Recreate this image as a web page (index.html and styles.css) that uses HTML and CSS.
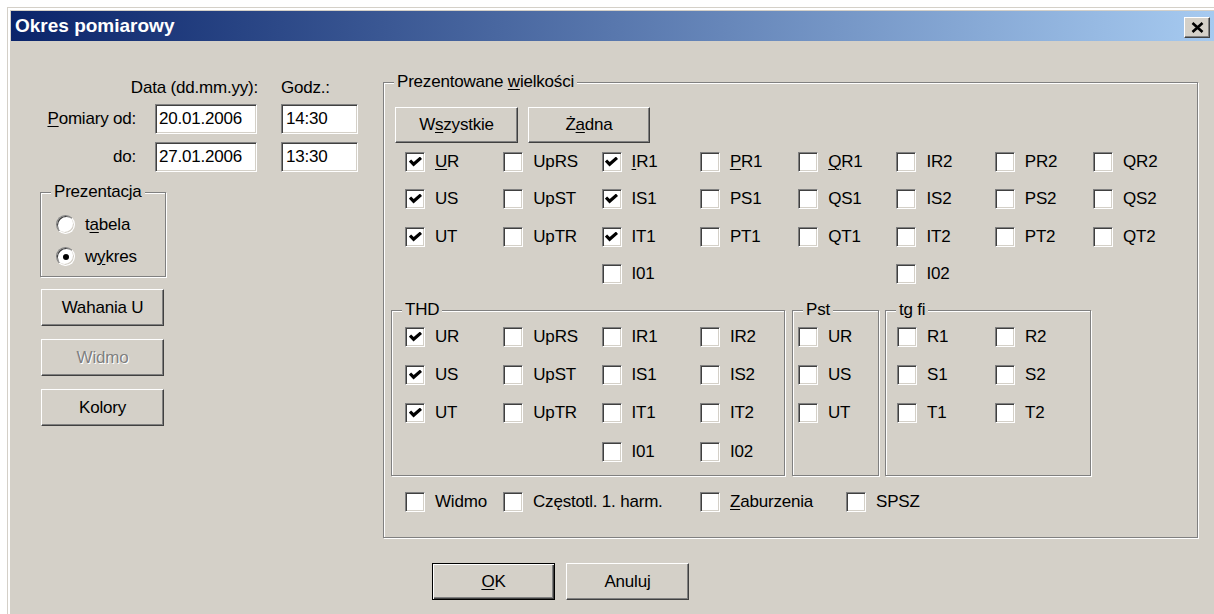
FILE: index.html
```html
<!DOCTYPE html>
<html lang="pl">
<head>
<meta charset="utf-8">
<title>Okres pomiarowy</title>
<link rel="stylesheet" href="styles.css">
</head>
<body>
<div class="window">
  <div class="titlebar">
    <span class="title">Okres pomiarowy</span>
    <span class="close"><svg width="13" height="11" viewBox="0 0 13 11"><path d="M1.5 1 L11.5 10 M11.5 1 L1.5 10" stroke="#000" stroke-width="2.6" fill="none"/></svg></span>
  </div>

  <div class="client">
    <div class="left">
      <div class="date-head">
        <span class="head-date">Data (dd.mm.yy):</span>
        <span class="head-time">Godz.:</span>
      </div>
      <div class="date-row">
        <span class="row-label"><u>P</u>omiary od:</span>
        <span class="field date">20.01.2006</span>
        <span class="field time">14:30</span>
      </div>
      <div class="date-row second">
        <span class="row-label">do:</span>
        <span class="field date">27.01.2006</span>
        <span class="field time">13:30</span>
      </div>

      <div class="group present">
        <span class="caption">Prezentacja</span>
        <div class="radios">
          <div class="opt"><span class="radio"></span><span>t<u>a</u>bela</span></div>
          <div class="opt"><span class="radio on"></span><span>w<u>y</u>kres</span></div>
        </div>
      </div>

      <div class="side-buttons">
        <button class="btn">Wahania U</button>
        <button class="btn disabled">Widmo</button>
        <button class="btn">Kolory</button>
      </div>
    </div>

    <div class="group main-group">
      <span class="caption">Prezentowane <u>w</u>ielkości</span>
      <div class="btn-row">
        <button class="btn top-btn">W<u>s</u>zystkie</button>
        <button class="btn top-btn narrow">Ż<u>a</u>dna</button>
      </div>

      <div class="grid-top">
        <div class="cb"><span class="box on"><svg viewBox="0 0 13 10" width="13" height="10"><path d="M1 3.6 L4.6 7.2 L12 0.8" fill="none" stroke="#000" stroke-width="3.2"/></svg></span><span><u>U</u>R</span></div>
        <div class="cb"><span class="box"></span><span>UpRS</span></div>
        <div class="cb"><span class="box on"><svg viewBox="0 0 13 10" width="13" height="10"><path d="M1 3.6 L4.6 7.2 L12 0.8" fill="none" stroke="#000" stroke-width="3.2"/></svg></span><span><u>I</u>R1</span></div>
        <div class="cb"><span class="box"></span><span><u>P</u>R1</span></div>
        <div class="cb"><span class="box"></span><span><u>Q</u>R1</span></div>
        <div class="cb"><span class="box"></span><span>IR2</span></div>
        <div class="cb"><span class="box"></span><span>PR2</span></div>
        <div class="cb"><span class="box"></span><span>QR2</span></div>

        <div class="cb"><span class="box on"><svg viewBox="0 0 13 10" width="13" height="10"><path d="M1 3.6 L4.6 7.2 L12 0.8" fill="none" stroke="#000" stroke-width="3.2"/></svg></span><span>US</span></div>
        <div class="cb"><span class="box"></span><span>UpST</span></div>
        <div class="cb"><span class="box on"><svg viewBox="0 0 13 10" width="13" height="10"><path d="M1 3.6 L4.6 7.2 L12 0.8" fill="none" stroke="#000" stroke-width="3.2"/></svg></span><span>IS1</span></div>
        <div class="cb"><span class="box"></span><span>PS1</span></div>
        <div class="cb"><span class="box"></span><span>QS1</span></div>
        <div class="cb"><span class="box"></span><span>IS2</span></div>
        <div class="cb"><span class="box"></span><span>PS2</span></div>
        <div class="cb"><span class="box"></span><span>QS2</span></div>

        <div class="cb"><span class="box on"><svg viewBox="0 0 13 10" width="13" height="10"><path d="M1 3.6 L4.6 7.2 L12 0.8" fill="none" stroke="#000" stroke-width="3.2"/></svg></span><span>UT</span></div>
        <div class="cb"><span class="box"></span><span>UpTR</span></div>
        <div class="cb"><span class="box on"><svg viewBox="0 0 13 10" width="13" height="10"><path d="M1 3.6 L4.6 7.2 L12 0.8" fill="none" stroke="#000" stroke-width="3.2"/></svg></span><span>IT1</span></div>
        <div class="cb"><span class="box"></span><span>PT1</span></div>
        <div class="cb"><span class="box"></span><span>QT1</span></div>
        <div class="cb"><span class="box"></span><span>IT2</span></div>
        <div class="cb"><span class="box"></span><span>PT2</span></div>
        <div class="cb"><span class="box"></span><span>QT2</span></div>

        <div></div><div></div>
        <div class="cb"><span class="box"></span><span>I01</span></div>
        <div></div><div></div>
        <div class="cb"><span class="box"></span><span>I02</span></div>
      </div>

      <div class="sub-row">
        <div class="group sub thd">
          <span class="caption">THD</span>
          <div class="grid-sub four">
            <div class="cb"><span class="box on"><svg viewBox="0 0 13 10" width="13" height="10"><path d="M1 3.6 L4.6 7.2 L12 0.8" fill="none" stroke="#000" stroke-width="3.2"/></svg></span><span>UR</span></div>
            <div class="cb"><span class="box"></span><span>UpRS</span></div>
            <div class="cb"><span class="box"></span><span>IR1</span></div>
            <div class="cb"><span class="box"></span><span>IR2</span></div>

            <div class="cb"><span class="box on"><svg viewBox="0 0 13 10" width="13" height="10"><path d="M1 3.6 L4.6 7.2 L12 0.8" fill="none" stroke="#000" stroke-width="3.2"/></svg></span><span>US</span></div>
            <div class="cb"><span class="box"></span><span>UpST</span></div>
            <div class="cb"><span class="box"></span><span>IS1</span></div>
            <div class="cb"><span class="box"></span><span>IS2</span></div>

            <div class="cb"><span class="box on"><svg viewBox="0 0 13 10" width="13" height="10"><path d="M1 3.6 L4.6 7.2 L12 0.8" fill="none" stroke="#000" stroke-width="3.2"/></svg></span><span>UT</span></div>
            <div class="cb"><span class="box"></span><span>UpTR</span></div>
            <div class="cb"><span class="box"></span><span>IT1</span></div>
            <div class="cb"><span class="box"></span><span>IT2</span></div>

            <div></div><div></div>
            <div class="cb"><span class="box"></span><span>I01</span></div>
            <div class="cb"><span class="box"></span><span>I02</span></div>
          </div>
        </div>

        <div class="group sub pst">
          <span class="caption">Pst</span>
          <div class="grid-sub one">
            <div class="cb"><span class="box"></span><span>UR</span></div>
            <div class="cb"><span class="box"></span><span>US</span></div>
            <div class="cb"><span class="box"></span><span>UT</span></div>
          </div>
        </div>

        <div class="group sub tgfi">
          <span class="caption">tg fi</span>
          <div class="grid-sub two">
            <div class="cb"><span class="box"></span><span>R1</span></div>
            <div class="cb"><span class="box"></span><span>R2</span></div>
            <div class="cb"><span class="box"></span><span>S1</span></div>
            <div class="cb"><span class="box"></span><span>S2</span></div>
            <div class="cb"><span class="box"></span><span>T1</span></div>
            <div class="cb"><span class="box"></span><span>T2</span></div>
          </div>
        </div>
      </div>

      <div class="bottom-row">
        <div class="cb w-widmo"><span class="box"></span><span>Widmo</span></div>
        <div class="cb w-freq"><span class="box"></span><span>Częstotl. 1. harm.</span></div>
        <div class="cb w-zab"><span class="box"></span><span><u>Z</u>aburzenia</span></div>
        <div class="cb"><span class="box"></span><span>SPSZ</span></div>
      </div>
    </div>
  </div>

  <div class="footer">
    <button class="btn default"><u>O</u>K</button>
    <button class="btn">Anuluj</button>
  </div>
</div>
</body>
</html>
```

FILE: styles.css
```css
html, body {
  margin: 0;
  padding: 0;
  background: #fff;
  overflow: hidden;
}

body {
  width: 1214px;
  height: 614px;
  font-family: "Liberation Sans", Arial, sans-serif;
  font-size: 17px;
  letter-spacing: -0.2px;
  color: #000;
}

u { text-decoration-thickness: 1px; text-underline-offset: 2px; }

/* window frame */
.window {
  box-sizing: border-box;
  width: 1207px;
  height: 620px;
  margin: 7px 0 0 7px;
  border-top: 1px solid #d4d0c8;
  border-left: 1px solid #d4d0c8;
  padding: 3px 0 0 3px;
  background: #d4d0c8;
  box-shadow: inset 2px 2px 0 #fff;
}

.titlebar {
  height: 30px;
  display: flex;
  align-items: center;
  justify-content: space-between;
  padding: 0 4px 0 4px;
  background: linear-gradient(to right, #0a246a, #a6caf0);
}

.title {
  font-family: "Liberation Sans", Arial, sans-serif;
  font-weight: bold;
  font-size: 19px;
  letter-spacing: 0;
  color: #fff;
}

.close {
  box-sizing: border-box;
  width: 26px;
  height: 21px;
  margin-top: 3px;
  display: flex;
  align-items: center;
  justify-content: center;
  background: #d4d0c8;
  border: 1px solid;
  border-color: #fff #404040 #404040 #fff;
  box-shadow: inset -1px -1px 0 #808080;
}

/* client area */
.client {
  display: flex;
  align-items: flex-start;
}

.left {
  width: 372px;
  flex: none;
}

.date-head {
  display: flex;
  margin-top: 36px;
  height: 22px;
  line-height: 22px;
}

.head-date { width: 247px; text-align: right; }
.head-time { margin-left: 23px; }

.date-row {
  display: flex;
  align-items: center;
  height: 30px;
  margin-top: 5px;
}
.date-row.second { margin-top: 8px; }

.row-label {
  width: 125px;
  margin-right: 19px;
  text-align: right;
}

.field {
  box-sizing: border-box;
  height: 30px;
  line-height: 27px;
  padding-left: 3px;
  background: #fff;
  border: 1px solid;
  border-color: #808080 #fff #fff #808080;
  box-shadow: inset 1px 1px 0 #404040, inset -1px -1px 0 #d4d0c8;
}
.field.date { width: 102px; }
.field.time { width: 77px; margin-left: 24px; padding-left: 4px; }

/* etched group boxes */
.group {
  position: relative;
  box-sizing: border-box;
  border: 1px solid #808080;
  box-shadow: inset 1px 1px 0 #fff, 1px 1px 0 #fff;
}

.caption {
  position: absolute;
  top: -11px;
  left: 10px;
  padding: 0 3px;
  line-height: 20px;
  background: #d4d0c8;
  white-space: nowrap;
}

.present {
  width: 126px;
  height: 85px;
  margin: 20px 0 0 29px;
  padding: 22px 0 0 15px;
}

.radios {
  display: flex;
  flex-direction: column;
  gap: 13px;
}

.opt {
  display: flex;
  align-items: center;
  gap: 10px;
  height: 19px;
}

.radio {
  box-sizing: border-box;
  width: 19px;
  height: 19px;
  flex: none;
  border-radius: 50%;
  background: #fff;
  border: 1px solid;
  border-color: #808080 #fff #fff #808080;
  box-shadow: inset 1px 1px 0 #404040, inset -1px -1px 0 #d4d0c8;
  display: flex;
  align-items: center;
  justify-content: center;
}
.radio.on::after {
  content: "";
  width: 6px;
  height: 6px;
  border-radius: 50%;
  background: #000;
}

/* push buttons */
.btn {
  box-sizing: border-box;
  width: 123px;
  height: 37px;
  padding: 0;
  font: inherit;
  letter-spacing: inherit;
  color: #000;
  background: #d4d0c8;
  border: 1px solid;
  border-color: #fff #404040 #404040 #fff;
  box-shadow: inset -1px -1px 0 #808080;
}
.btn.disabled {
  color: #808080;
  text-shadow: 1px 1px 0 #fff;
}
.btn.default {
  border: 1px solid #000;
  box-shadow: inset 1px 1px 0 #fff, inset -1px -1px 0 #404040, inset -2px -2px 0 #808080;
}

.side-buttons {
  display: flex;
  flex-direction: column;
  gap: 13px;
  margin: 12px 0 0 30px;
}

/* right panel */
.main-group {
  width: 815px;
  height: 456px;
  margin-top: 41px;
  padding: 24px 0 0 11px;
}

.btn-row {
  display: flex;
  gap: 10px;
}
.top-btn { height: 36px; }
.top-btn.narrow { width: 122px; }

.cb {
  display: flex;
  align-items: center;
  gap: 10px;
  height: 20px;
  white-space: nowrap;
}

.box {
  box-sizing: border-box;
  width: 20px;
  height: 20px;
  flex: none;
  background: #fff;
  border: 1px solid;
  border-color: #808080 #fff #fff #808080;
  box-shadow: inset 1px 1px 0 #404040, inset -1px -1px 0 #d4d0c8;
  display: flex;
  align-items: center;
  justify-content: center;
}

.grid-top {
  display: grid;
  grid-template-columns: repeat(8, 98.3px);
  grid-auto-rows: 20px;
  row-gap: 17.3px;
  margin: 9px 0 0 10px;
}

.sub-row {
  display: flex;
  margin: 26px 0 0 -4px;
}

.sub {
  height: 166px;
  padding-top: 16px;
}
.thd { width: 394px; padding-left: 13px; }
.pst { width: 87px; margin-left: 7px; padding-left: 5px; }
.tgfi { width: 206px; margin-left: 6px; padding-left: 11px; }

.grid-sub {
  display: grid;
  grid-auto-rows: 20px;
  row-gap: 18.3px;
}
.grid-sub.four { grid-template-columns: repeat(4, 98.3px); }
.grid-sub.one { grid-template-columns: 80px; }
.grid-sub.two { grid-template-columns: repeat(2, 98px); }

.bottom-row {
  display: flex;
  margin: 16px 0 0 10px;
}
.w-widmo { width: 98px; }
.w-freq { width: 197px; }
.w-zab { width: 146px; }

/* dialog buttons */
.footer {
  display: flex;
  gap: 11px;
  margin: 25px 0 0 421px;
}
```
